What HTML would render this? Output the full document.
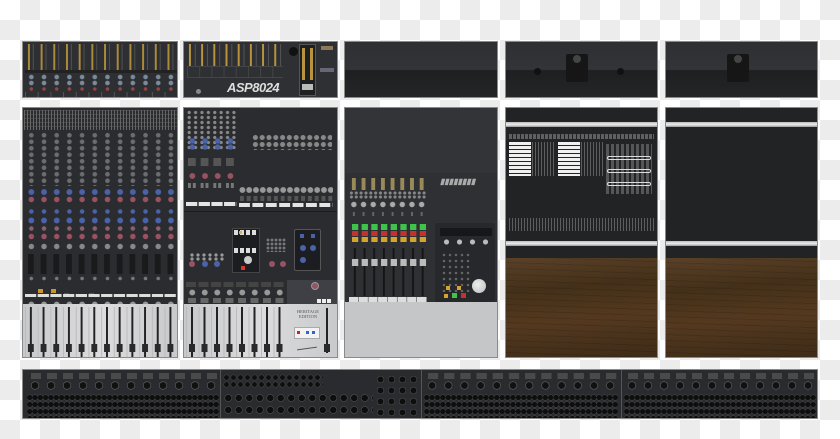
<!DOCTYPE html>
<html><head><meta charset="utf-8"><style>
*{margin:0;padding:0;box-sizing:border-box}
body{width:840px;height:439px;overflow:hidden;position:relative;font-family:"Liberation Sans",sans-serif;
background-color:#fff;background-image:linear-gradient(45deg,#ececec 25%,transparent 25%,transparent 75%,#ececec 75%),linear-gradient(45deg,#ececec 25%,transparent 25%,transparent 75%,#ececec 75%);background-size:40px 40px;background-position:0 0,20px 20px}
.a{position:absolute}
.p{position:absolute;background:#2b2c2f;border:1px solid #8a8a8a;overflow:hidden}
.k{position:absolute;background-repeat:repeat}
</style></head><body>

<!-- TOP ROW -->
<div class="p" style="left:22px;top:41px;width:156px;height:57px;background:#2e2f33">
 <div class="k" style="left:2px;top:2px;width:152px;height:26px;background-image:linear-gradient(90deg,transparent 3px,#b8953c 3px,#b8953c 5px,transparent 5px,transparent 8px,#555 8px,#555 9px,transparent 9px);background-size:12.7px 26px;opacity:.9"></div>
 <div class="k" style="left:2px;top:28px;width:152px;height:3px;background:#222"></div>
 <div class="k" style="left:2px;top:32px;width:152px;height:12px;background-image:radial-gradient(circle,#7a8a9a 2px,transparent 2.6px);background-size:12.7px 6px"></div>
 <div class="k" style="left:2px;top:44px;width:152px;height:6px;background-image:radial-gradient(circle,#944 1.5px,transparent 2px);background-size:12.7px 6px"></div>
 <div class="k" style="left:2px;top:50px;width:152px;height:6px;background-image:linear-gradient(90deg,#555 1px,transparent 1px);background-size:12.7px 6px"></div>
</div>
<div class="p" style="left:183px;top:41px;width:155px;height:57px;background:#2f3034">
 <div class="k" style="left:3px;top:2px;width:96px;height:22px;background-image:linear-gradient(90deg,transparent 2px,#b8953c 2px,#b8953c 4px,transparent 4px,transparent 8px,#555 8px,#555 9px,transparent 9px);background-size:12.2px 22px"></div>
 <div class="k" style="left:3px;top:24px;width:96px;height:12px;background-image:linear-gradient(90deg,#444 1px,transparent 1px);background-size:12.2px 12px;border-top:1px solid #444;border-bottom:1px solid #444"></div>
 <div class="a" style="left:105px;top:5px;width:9px;height:9px;border-radius:50%;background:#111"></div>
 <div class="a" style="left:115px;top:2px;width:17px;height:52px;background:#1e1f22;border:1px solid #555"></div>
 <div class="a" style="left:118px;top:6px;width:3px;height:32px;background:#b8953c"></div>
 <div class="a" style="left:126px;top:6px;width:3px;height:32px;background:#b8953c"></div>
 <div class="a" style="left:118px;top:42px;width:11px;height:6px;background:#bbb"></div>
 <div class="a" style="left:137px;top:4px;width:12px;height:4px;background:#8a7a5a"></div>
 <div class="a" style="left:136px;top:26px;width:14px;height:4px;background:#667"></div>
 <div class="a" style="left:12px;top:47px;width:5px;height:5px;border-radius:50%;background:#888"></div>
 <div class="a" style="left:43px;top:38px;font-size:13px;font-weight:bold;font-style:italic;color:#ddd;letter-spacing:-0.5px">ASP8024</div>
</div>
<div class="p" style="left:344px;top:41px;width:154px;height:57px;background:linear-gradient(#2e2f32 0,#333438 50%,#1e1f21 52%,#242527 100%)"></div>
<div class="p" style="left:505px;top:41px;width:153px;height:57px;background:linear-gradient(#2e2f32 0,#333438 50%,#1e1f21 52%,#242527 100%)">
 <div class="a" style="left:60px;top:12px;width:22px;height:28px;background:#161616;border-radius:2px"></div>
 <div class="a" style="left:67px;top:13px;width:8px;height:8px;border-radius:50%;background:#444"></div>
 <div class="a" style="left:28px;top:26px;width:7px;height:7px;border-radius:50%;background:#111"></div>
 <div class="a" style="left:111px;top:26px;width:7px;height:7px;border-radius:50%;background:#111"></div>
</div>
<div class="p" style="left:665px;top:41px;width:153px;height:57px;background:linear-gradient(#2e2f32 0,#333438 50%,#1e1f21 52%,#242527 100%)">
 <div class="a" style="left:61px;top:12px;width:22px;height:28px;background:#161616;border-radius:2px"></div>
 <div class="a" style="left:68px;top:13px;width:8px;height:8px;border-radius:50%;background:#444"></div>
</div>

<!-- MIDDLE ROW -->
<div class="p" style="left:22px;top:107px;width:156px;height:251px;background:#2b2c30">
 <div class="k" style="left:1px;top:2px;width:153px;height:20px;background-image:linear-gradient(90deg,#666 1px,transparent 1px),linear-gradient(#444 1px,transparent 1px);background-size:3px 20px,153px 4px"></div>
 <div class="k" style="left:2px;top:24px;width:152px;height:54px;background-image:radial-gradient(circle,#6a6c70 2px,transparent 2.6px);background-size:12.7px 6.5px"></div>
 <div class="k" style="left:2px;top:79px;width:152px;height:10px;background-image:radial-gradient(circle,#4a62a8 2.6px,transparent 3.2px);background-size:12.7px 10px"></div>
 <div class="k" style="left:2px;top:87px;width:152px;height:9px;background-image:radial-gradient(circle,#995262 2.4px,transparent 3px);background-size:12.7px 9px"></div>
 <div class="k" style="left:2px;top:100px;width:152px;height:7px;background-image:radial-gradient(circle,#4a62a8 2px,transparent 2.5px);background-size:12.7px 7px"></div>
 <div class="k" style="left:2px;top:108px;width:152px;height:9px;background-image:radial-gradient(circle,#4a62a8 2.6px,transparent 3.2px);background-size:12.7px 9px"></div>
 <div class="k" style="left:2px;top:117px;width:152px;height:7px;background-image:radial-gradient(circle,#8a6070 2px,transparent 2.5px);background-size:12.7px 7px"></div>
 <div class="k" style="left:2px;top:124px;width:152px;height:9px;background-image:radial-gradient(circle,#995262 2.4px,transparent 3px);background-size:12.7px 9px"></div>
 <div class="k" style="left:2px;top:134px;width:152px;height:9px;background-image:radial-gradient(circle,#888 2.4px,transparent 3px);background-size:12.7px 9px"></div>
 <div class="k" style="left:2px;top:146px;width:152px;height:20px;background-image:linear-gradient(90deg,transparent 3px,#1a1a1c 3px,#1a1a1c 9px,transparent 9px);background-size:12.7px 20px"></div>
 <div class="k" style="left:2px;top:168px;width:152px;height:5px;background-image:radial-gradient(circle,#777 1.6px,transparent 2px);background-size:12.7px 5px"></div>
 <div class="a" style="left:15px;top:181px;width:5px;height:4px;background:#c8952a"></div>
 <div class="a" style="left:28px;top:181px;width:5px;height:4px;background:#c8952a"></div>
 <div class="a" style="left:41px;top:185px;width:5px;height:4px;background:#c22"></div>
 <div class="a" style="left:66px;top:185px;width:5px;height:4px;background:#c22"></div>
 <div class="k" style="left:2px;top:186px;width:152px;height:3px;background-image:linear-gradient(90deg,#ddd 11px,transparent 11px);background-size:12.7px 3px"></div>
 <div class="k" style="left:2px;top:192px;width:152px;height:9px;background-image:radial-gradient(circle,#999 2.6px,transparent 3.2px);background-size:12.7px 9px"></div>
 <div class="a" style="left:0;top:196px;width:156px;height:55px;background:linear-gradient(90deg,#c8c9cb,#dcdcde 50%,#c8c9cb)"></div>
 <div class="k" style="left:2px;top:199px;width:152px;height:52px;background-image:linear-gradient(90deg,transparent 5px,#222 5px,#222 7px,transparent 7px),linear-gradient(90deg,#bbb 1px,transparent 1px);background-size:12.7px 52px,12.7px 52px"></div>
 <div class="k" style="left:2px;top:236px;width:152px;height:8px;background-image:linear-gradient(90deg,transparent 3px,#2a2a2a 3px,#2a2a2a 9px,transparent 9px);background-size:12.7px 8px"></div>
</div>
<div class="p" style="left:183px;top:107px;width:155px;height:251px;background:#2b2c30">
 <div class="k" style="left:2px;top:2px;width:51px;height:40px;background-image:radial-gradient(circle,#888 1.4px,transparent 1.9px);background-size:6.4px 5px"></div>
 <div class="k" style="left:2px;top:30px;width:51px;height:12px;background-image:radial-gradient(circle,#4a62a8 2.4px,transparent 3px);background-size:12.7px 6px"></div>
 <div class="k" style="left:2px;top:50px;width:51px;height:8px;background-image:linear-gradient(90deg,transparent 2px,#555 2px,#555 10px,transparent 10px);background-size:12.7px 8px"></div>
 <div class="k" style="left:2px;top:64px;width:51px;height:8px;background-image:radial-gradient(circle,#995262 2.6px,transparent 3.2px);background-size:12.7px 8px"></div>
 <div class="k" style="left:2px;top:75px;width:51px;height:5px;background-image:linear-gradient(90deg,transparent 2px,#777 2px,#777 5px,transparent 5px,transparent 7px,#777 7px,#777 10px,transparent 10px);background-size:12.7px 5px"></div>
 <div class="k" style="left:2px;top:94px;width:51px;height:4px;background-image:linear-gradient(90deg,#e4e4e4 11px,transparent 11px);background-size:12.7px 4px"></div>
 <div class="k" style="left:68px;top:26px;width:80px;height:16px;background-image:radial-gradient(circle,#888 2.2px,transparent 2.8px);background-size:6.8px 7px"></div>
 <div class="k" style="left:55px;top:76px;width:94px;height:12px;background-image:radial-gradient(circle,#999 2.6px,transparent 3.2px);background-size:6.8px 12px"></div>
 <div class="k" style="left:55px;top:88px;width:94px;height:5px;background-image:linear-gradient(90deg,transparent 1px,#555 1px,#555 5px,transparent 5px);background-size:6.8px 5px"></div>
 <div class="k" style="left:55px;top:95px;width:94px;height:4px;background-image:linear-gradient(90deg,#e4e4e4 11px,transparent 11px);background-size:13.4px 4px"></div>
 <div class="a" style="left:0;top:103px;width:155px;height:1px;background:#1c1c1e"></div>
 <div class="k" style="left:5px;top:145px;width:36px;height:8px;background-image:radial-gradient(circle,#999 1.4px,transparent 1.9px);background-size:6px 4px"></div>
 <div class="a" style="left:5px;top:153px;width:6px;height:6px;border-radius:50%;background:#995262"></div>
 <div class="a" style="left:18px;top:153px;width:6px;height:6px;border-radius:50%;background:#4a62a8"></div>
 <div class="a" style="left:30px;top:153px;width:6px;height:6px;border-radius:50%;background:#4a62a8"></div>
 <div class="a" style="left:48px;top:120px;width:28px;height:45px;background:#1c1d20;border:1px solid #444"></div>
 <div class="k" style="left:50px;top:122px;width:24px;height:5px;background-image:linear-gradient(90deg,#ddd 4px,transparent 4px);background-size:6px 5px"></div>
 <div class="a" style="left:55px;top:123px;width:3px;height:3px;background:#e0b040"></div>
 <div class="k" style="left:50px;top:140px;width:24px;height:5px;background-image:linear-gradient(90deg,#ddd 4px,transparent 4px);background-size:6px 5px"></div>
 <div class="a" style="left:60px;top:148px;width:8px;height:8px;border-radius:50%;background:#ccc"></div>
 <div class="a" style="left:57px;top:158px;width:4px;height:4px;background:#d33"></div>
 <div class="k" style="left:82px;top:130px;width:20px;height:14px;background-image:radial-gradient(circle,#777 1.2px,transparent 1.7px);background-size:4px 4px"></div>
 <div class="a" style="left:85px;top:153px;width:6px;height:6px;border-radius:50%;background:#995262"></div>
 <div class="a" style="left:96px;top:153px;width:6px;height:6px;border-radius:50%;background:#995262"></div>
 <div class="a" style="left:110px;top:121px;width:27px;height:42px;background:#1c1d20;border:1px solid #555;border-radius:2px"></div>
 <div class="a" style="left:116px;top:126px;width:4px;height:4px;background:#4a62a8"></div>
 <div class="a" style="left:127px;top:126px;width:4px;height:4px;background:#4a62a8"></div>
 <div class="a" style="left:116px;top:137px;width:6px;height:6px;border-radius:50%;background:#4a62a8"></div>
 <div class="a" style="left:126px;top:137px;width:6px;height:6px;border-radius:50%;background:#4a62a8"></div>
 <div class="a" style="left:116px;top:149px;width:6px;height:6px;border-radius:50%;background:#4a62a8"></div>
 <div class="k" style="left:2px;top:174px;width:100px;height:5px;background-image:linear-gradient(90deg,#444 10px,transparent 10px);background-size:12.5px 5px"></div>
 <div class="k" style="left:2px;top:180px;width:100px;height:9px;background-image:radial-gradient(circle,#999 2.6px,transparent 3.2px);background-size:12.5px 9px"></div>
 <div class="k" style="left:2px;top:190px;width:100px;height:5px;background-image:linear-gradient(90deg,transparent 2px,#666 2px,#666 10px,transparent 10px);background-size:12.5px 5px"></div>
 <div class="a" style="left:103px;top:172px;width:52px;height:27px;background:#3e4046"></div>
 <div class="a" style="left:127px;top:174px;width:8px;height:8px;border-radius:50%;background:#995262;border:1px solid #999"></div>
 <div class="a" style="left:133px;top:191px;width:15px;height:4px;background-image:linear-gradient(90deg,#eee 4px,transparent 4px);background-size:5px 4px"></div>
 <div class="a" style="left:0;top:196px;width:155px;height:55px;background:linear-gradient(90deg,#c8c9cb,#dcdcde 50%,#c8c9cb)"></div>
 <div class="k" style="left:2px;top:199px;width:100px;height:52px;background-image:linear-gradient(90deg,transparent 5px,#222 5px,#222 7px,transparent 7px),linear-gradient(90deg,#bbb 1px,transparent 1px);background-size:12.5px 52px,12.5px 52px"></div>
 <div class="k" style="left:2px;top:236px;width:100px;height:8px;background-image:linear-gradient(90deg,transparent 3px,#2a2a2a 3px,#2a2a2a 9px,transparent 9px);background-size:12.5px 8px"></div>
 <div class="a" style="left:142px;top:200px;width:2px;height:45px;background:#222"></div>
 <div class="a" style="left:140px;top:236px;width:6px;height:8px;background:#2a2a2a"></div>
 <div class="a" style="left:104px;top:201px;width:40px;text-align:center;font-family:'Liberation Serif',serif;font-size:4.5px;color:#555;line-height:5px">HERITAGE<br>EDITION</div>
 <div class="a" style="left:110px;top:219px;width:26px;height:12px;background:#f2f2f2;border:1px solid #aaa"></div>
 <div class="a" style="left:113px;top:223px;width:3px;height:3px;background:#c22"></div>
 <div class="a" style="left:122px;top:223px;width:3px;height:3px;background:#36c"></div>
 <div class="a" style="left:128px;top:223px;width:3px;height:3px;background:#36c"></div>
 <div class="a" style="left:113px;top:240px;width:20px;height:1px;background:#555;transform:rotate(-8deg)"></div>
</div>
<div class="p" style="left:344px;top:107px;width:154px;height:251px;background:#2f3034">
 <div class="a" style="left:0;top:0;width:154px;height:65px;background:#333438"></div>
 <div class="k" style="left:4px;top:70px;width:78px;height:12px;background-image:linear-gradient(90deg,transparent 3px,#9a8a5a 3px,#9a8a5a 7px,transparent 7px);background-size:9.7px 12px"></div>
 <div class="k" style="left:4px;top:83px;width:78px;height:8px;background-image:radial-gradient(circle,#888 1.3px,transparent 1.8px);background-size:4.85px 4px"></div>
 <div class="k" style="left:4px;top:92px;width:78px;height:9px;background-image:radial-gradient(circle,#aaa 2.4px,transparent 3px);background-size:9.7px 9px"></div>
 <div class="k" style="left:4px;top:104px;width:78px;height:4px;background-image:linear-gradient(90deg,transparent 4px,#666 4px,#666 6px,transparent 6px);background-size:9.7px 4px"></div>
 <div class="a" style="left:95px;top:69px;width:45px;height:9px;font-size:8px;font-weight:bold;font-style:italic;color:#aaa;line-height:9px">▮▮▮▮▮▮▮▮</div>
 <div class="k" style="left:5px;top:116px;width:78px;height:6px;background-image:linear-gradient(90deg,transparent 2px,#3ec44a 2px,#3ec44a 8px,transparent 8px);background-size:9.7px 6px"></div>
 <div class="k" style="left:5px;top:123px;width:78px;height:5px;background-image:linear-gradient(90deg,transparent 2px,#c63030 2px,#c63030 8px,transparent 8px);background-size:9.7px 5px"></div>
 <div class="k" style="left:5px;top:129px;width:78px;height:5px;background-image:linear-gradient(90deg,transparent 2px,#d4a42c 2px,#d4a42c 8px,transparent 8px);background-size:9.7px 5px"></div>
 <div class="k" style="left:5px;top:140px;width:78px;height:48px;background-image:linear-gradient(90deg,transparent 4px,#151515 4px,#151515 6px,transparent 6px);background-size:9.7px 48px"></div>
 <div class="k" style="left:5px;top:151px;width:78px;height:7px;background-image:linear-gradient(90deg,transparent 2px,#bbb 2px,#bbb 8px,transparent 8px);background-size:9.7px 7px"></div>
 <div class="k" style="left:4px;top:189px;width:78px;height:5px;background-image:linear-gradient(90deg,#ddd 9px,transparent 9px);background-size:9.7px 5px"></div>
 <div class="a" style="left:90px;top:115px;width:60px;height:88px;background:#27282b;border-radius:2px"></div>
 <div class="a" style="left:95px;top:120px;width:52px;height:8px;background:#16171a"></div>
 <div class="k" style="left:95px;top:131px;width:52px;height:6px;background-image:radial-gradient(circle,#bbb 2.3px,transparent 2.8px);background-size:13px 6px"></div>
 <div class="k" style="left:96px;top:144px;width:30px;height:40px;background-image:radial-gradient(circle,#666 1px,transparent 1.5px);background-size:6px 6px"></div>
 <div class="a" style="left:101px;top:178px;width:4px;height:4px;background:#d4a42c"></div>
 <div class="a" style="left:112px;top:178px;width:4px;height:4px;background:#d4a42c"></div>
 <div class="a" style="left:99px;top:186px;width:4px;height:4px;background:#d4a42c"></div>
 <div class="a" style="left:107px;top:185px;width:5px;height:5px;background:#3ec44a"></div>
 <div class="a" style="left:116px;top:185px;width:5px;height:5px;background:#c63030"></div>
 <div class="a" style="left:127px;top:171px;width:14px;height:14px;border-radius:50%;background:radial-gradient(circle at 40% 40%,#eee,#bbb)"></div>
 <div class="a" style="left:0;top:194px;width:154px;height:57px;background:#c5c6c8"></div>
</div>
<div class="p" style="left:505px;top:107px;width:153px;height:251px;background:#222325">
 <div class="a" style="left:0;top:14px;width:153px;height:5px;background:linear-gradient(#bbb,#eee,#999)"></div>
 <div class="k" style="left:3px;top:26px;width:145px;height:5px;background-image:linear-gradient(90deg,#888 3px,transparent 3px);background-size:4px 5px;opacity:.6"></div>
 <div class="k" style="left:3px;top:34px;width:22px;height:34px;background-image:linear-gradient(#f0f0f0 3px,transparent 3px);background-size:22px 4px"></div>
 <div class="k" style="left:52px;top:34px;width:22px;height:34px;background-image:linear-gradient(#f0f0f0 3px,transparent 3px);background-size:22px 4px"></div>
 <div class="k" style="left:26px;top:34px;width:22px;height:34px;background-image:linear-gradient(90deg,#999 1px,transparent 1px);background-size:3px 4px;opacity:.5"></div>
 <div class="k" style="left:75px;top:34px;width:22px;height:34px;background-image:linear-gradient(90deg,#999 1px,transparent 1px);background-size:3px 4px;opacity:.5"></div>
 <div class="k" style="left:100px;top:36px;width:46px;height:50px;background-image:linear-gradient(90deg,#888 3px,transparent 3px);background-size:5px 6px;opacity:.5"></div>
 <div class="a" style="left:101px;top:48px;width:44px;height:4px;border:1px solid #ddd;border-radius:2px"></div>
 <div class="a" style="left:101px;top:61px;width:44px;height:4px;border:1px solid #ddd;border-radius:2px"></div>
 <div class="a" style="left:101px;top:74px;width:44px;height:4px;border:1px solid #ddd;border-radius:2px"></div>
 <div class="k" style="left:3px;top:110px;width:145px;height:13px;background-image:linear-gradient(90deg,#999 1px,transparent 1px),linear-gradient(transparent 3px,#222 3px,#222 4px,transparent 4px);background-size:3px 13px,145px 4px;opacity:.5"></div>
 <div class="a" style="left:0;top:133px;width:153px;height:5px;background:linear-gradient(#bbb,#eee,#999)"></div>
 <div class="a" style="left:0;top:150px;width:153px;height:101px;background:linear-gradient(175deg,#5a4128,#443019 30%,#54391f 60%,#3c2a17);"></div>
 <div class="a" style="left:0;top:150px;width:153px;height:101px;background-image:repeating-linear-gradient(2deg,rgba(0,0,0,.12) 0 1px,transparent 1px 6px)"></div>
</div>
<div class="p" style="left:665px;top:107px;width:153px;height:251px;background:#222325">
 <div class="a" style="left:0;top:14px;width:153px;height:5px;background:linear-gradient(#bbb,#eee,#999)"></div>
 <div class="a" style="left:0;top:133px;width:153px;height:5px;background:linear-gradient(#bbb,#eee,#999)"></div>
 <div class="a" style="left:0;top:150px;width:153px;height:101px;background:linear-gradient(175deg,#5a4128,#443019 30%,#54391f 60%,#3c2a17);"></div>
 <div class="a" style="left:0;top:150px;width:153px;height:101px;background-image:repeating-linear-gradient(2deg,rgba(0,0,0,.12) 0 1px,transparent 1px 6px)"></div>
</div>

<!-- BOTTOM STRIP -->
<div class="p" style="left:22px;top:369px;width:796px;height:50px;background:#2a2b2e">
 <div class="k" style="left:4px;top:3px;width:192px;height:6px;background-image:linear-gradient(90deg,transparent 4px,#4a4a4a 4px,#4a4a4a 14px,transparent 14px);background-size:16px 6px"></div>
 <div class="k" style="left:4px;top:10px;width:192px;height:11px;background-image:radial-gradient(circle,#111 3.2px,#6a6a6a 3.7px,transparent 4.3px);background-size:16px 11px"></div>
 <div class="k" style="left:4px;top:24px;width:192px;height:24px;background-image:radial-gradient(circle,#0e0e0e 2.4px,#4a4a4a 2.8px,transparent 3.3px);background-size:5.33px 7px"></div>
 <div class="a" style="left:197px;top:0;width:1px;height:50px;background:#555"></div>
 <div class="k" style="left:200px;top:4px;width:100px;height:14px;background-image:radial-gradient(circle,#0e0e0e 2.2px,#4a4a4a 2.6px,transparent 3.1px);background-size:7px 7px"></div>
 <div class="k" style="left:200px;top:22px;width:150px;height:26px;background-image:radial-gradient(circle,#0e0e0e 3px,#555 3.4px,transparent 4px);background-size:10.5px 12px"></div>
 <div class="k" style="left:352px;top:4px;width:44px;height:44px;background-image:radial-gradient(circle,#0e0e0e 2.8px,#555 3.2px,transparent 3.8px);background-size:11px 11px"></div>
 <div class="a" style="left:398px;top:0;width:1px;height:50px;background:#555"></div>
 <div class="k" style="left:401px;top:3px;width:194px;height:6px;background-image:linear-gradient(90deg,transparent 4px,#4a4a4a 4px,#4a4a4a 14px,transparent 14px);background-size:16.2px 6px"></div>
 <div class="k" style="left:401px;top:10px;width:194px;height:11px;background-image:radial-gradient(circle,#111 3.2px,#6a6a6a 3.7px,transparent 4.3px);background-size:16.2px 11px"></div>
 <div class="k" style="left:401px;top:24px;width:194px;height:24px;background-image:radial-gradient(circle,#0e0e0e 2.4px,#4a4a4a 2.8px,transparent 3.3px);background-size:5.4px 7px"></div>
 <div class="a" style="left:598px;top:0;width:1px;height:50px;background:#555"></div>
 <div class="k" style="left:601px;top:3px;width:192px;height:6px;background-image:linear-gradient(90deg,transparent 4px,#4a4a4a 4px,#4a4a4a 14px,transparent 14px);background-size:16px 6px"></div>
 <div class="k" style="left:601px;top:10px;width:192px;height:11px;background-image:radial-gradient(circle,#111 3.2px,#6a6a6a 3.7px,transparent 4.3px);background-size:16px 11px"></div>
 <div class="k" style="left:601px;top:24px;width:192px;height:24px;background-image:radial-gradient(circle,#0e0e0e 2.4px,#4a4a4a 2.8px,transparent 3.3px);background-size:5.33px 7px"></div>
</div>
</body></html>
